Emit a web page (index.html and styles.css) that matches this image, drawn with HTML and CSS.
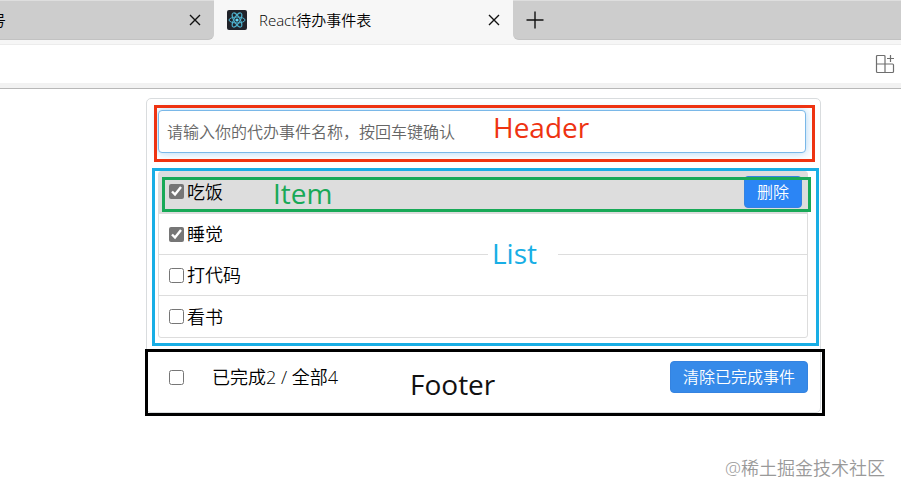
FILE: index.html
```html
<!DOCTYPE html>
<html lang="zh-CN">
<head>
    <meta charset="UTF-8">
    <meta name="viewport" content="width=device-width, initial-scale=1.0">
    <title>React待办事件表</title>
    <link rel="stylesheet" href="styles.css">
</head>
<body>
    <!-- Browser chrome -->
    <div class="tabs">
        <div class="tab tab-left">
            <span class="tab-cut">号</span>
            <button class="icon-btn" aria-label="关闭">
                <svg width="12" height="12" viewBox="0 0 12 12"><path d="M1 1l10 10M11 1L1 11"/></svg>
            </button>
        </div>
        <div class="tab tab-active">
            <svg class="favicon" width="20" height="20" viewBox="0 0 20 20">
                <rect width="20" height="20" rx="2"/>
                <ellipse cx="10" cy="10" rx="8" ry="3"/>
                <ellipse cx="10" cy="10" rx="8" ry="3" transform="rotate(60 10 10)"/>
                <ellipse cx="10" cy="10" rx="8" ry="3" transform="rotate(120 10 10)"/>
                <circle cx="10" cy="10" r="1.6"/>
            </svg>
            <span class="tab-title">React待办事件表</span>
            <button class="icon-btn" aria-label="关闭">
                <svg width="12" height="12" viewBox="0 0 12 12"><path d="M1 1l10 10M11 1L1 11"/></svg>
            </button>
        </div>
        <div class="tab tab-rest">
            <button class="icon-btn" aria-label="新建标签页">
                <svg width="18" height="18" viewBox="0 0 18 18"><path d="M9 0.5v17M0.5 9h17"/></svg>
            </button>
        </div>
    </div>
    <div class="toolbar">
        <button class="icon-btn ext-btn" aria-label="扩展">
            <svg width="20" height="20" viewBox="0 0 20 20"><path d="M10 18.5V2.5q0-1-1-1H2.500q-1 0-1 1v15q0 1 1 1H17.500q1 0 1-1V11q0-1-1-1H1.500M15.500 1v7M12 4.500h7"/></svg>
        </button>
    </div>

    <main class="page">
        <div class="todo">
            <header class="todo-header">
                <input type="text" class="todo-input" aria-label="事件名称" placeholder="请输入你的代办事件名称，按回车键确认">
                <div class="mark mark-header"><span class="mark-text">Header</span></div>
            </header>

            <section class="todo-list">
                <ul class="items">
                    <li class="item item-hover">
                        <label><input type="checkbox" checked>吃饭</label>
                        <button class="btn btn-delete">删除</button>
                        <div class="mark mark-item"><span class="mark-text">Item</span></div>
                    </li>
                    <li class="item"><label><input type="checkbox" checked>睡觉</label></li>
                    <li class="item"><label><input type="checkbox">打代码</label></li>
                    <li class="item"><label><input type="checkbox">看书</label></li>
                </ul>
                <div class="mark mark-list"><span class="mark-text">List</span></div>
            </section>

            <footer class="todo-footer">
                <label><input type="checkbox"><span class="count">已完成2 / 全部4</span></label>
                <button class="btn">清除已完成事件</button>
                <div class="mark mark-footer"><span class="mark-text">Footer</span></div>
            </footer>
        </div>
    </main>

    <div class="watermark">@稀土掘金技术社区</div>
</body>
</html>
```
FILE: styles.css
```css
* {
    box-sizing: border-box;
}

body {
    margin: 0;
    min-height: 100vh;
    position: relative;
    background: #fff;
    color: #000;
    font-family: "Open Sans", "Noto Sans CJK SC", sans-serif;
    font-size: 18px;
    font-weight: 350;
}

/* Browser chrome */
.tabs {
    display: flex;
    height: 45px;
    padding-bottom: 5px;
    background: #f6f6f6;
    border-bottom: 1px solid #ececec;
}

.tab {
    display: flex;
    align-items: center;
    height: 40px;
}

.tab-left,
.tab-rest {
    background: #cdcdcd;
    border-top: 1px solid #dedede;
    border-bottom: 1px solid #c2c2c2;
}

.tab-left {
    width: 214px;
    justify-content: space-between;
    padding-right: 10px;
    border-radius: 0 0 6px 0;
}

.tab-cut {
    display: flex;
    justify-content: flex-end;
    width: 6px;
    overflow: hidden;
    font-size: 15px;
    line-height: 20px;
}

.tab-active {
    width: 299px;
    gap: 12px;
    padding: 0 10px 0 13px;
    background: #f7f7f7;
}

.tab-title {
    flex: 1;
    font-size: 15px;
    line-height: 20px;
}

.tab-rest {
    flex: 1;
    padding-left: 12px;
    border-radius: 0 0 0 6px;
}

.icon-btn {
    display: flex;
    padding: 1px;
    border: none;
    background: none;
}

.tab-left .icon-btn,
.tab-active .icon-btn {
    padding: 3px;
}

.icon-btn path {
    fill: none;
    stroke: #111;
    stroke-width: 1.4;
}

.favicon rect {
    fill: #20232a;
}

.favicon ellipse {
    fill: none;
    stroke: #4fb4d0;
    stroke-width: 1;
}

.favicon circle {
    fill: #61dafb;
}

.toolbar {
    display: flex;
    align-items: center;
    justify-content: flex-end;
    height: 44px;
    padding-right: 5px;
    border-bottom: 1px solid #b8b8b8;
    box-shadow: inset 0 -5px #f2f2f2;
}

.ext-btn {
    margin-bottom: 5px;
}

.ext-btn path {
    stroke: #6e6e6e;
    stroke-width: 1.2;
}

/* Todo card */
.page {
    padding: 9px 80px 0 146px;
}

.todo {
    padding: 11px 12px 19px 11px;
    border: 1px solid #d9dcde;
    border-radius: 5px;
}

.todo-header,
.todo-list,
.todo-footer,
.item {
    position: relative;
}

.todo-input {
    display: block;
    width: calc(100% - 2px);
    height: 43px;
    padding: 0 8px;
    border: 1px solid #7ab8e8;
    border-radius: 4px;
    box-shadow: 0 0 8px rgba(82, 168, 236, 0.5);
    font-family: inherit;
    font-size: 16px;
    font-weight: inherit;
}

.todo-input::placeholder {
    color: #666;
}

.items {
    margin: 18px 0 0;
    padding: 0;
    list-style: none;
    border: 1px solid #ddd;
    border-radius: 3px;
}

.item {
    display: flex;
    align-items: center;
    justify-content: space-between;
    height: 41px;
    padding: 0 5px 0 10px;
    border-bottom: 1px solid #ddd;
}

.item:last-child {
    border-bottom: none;
}

.item-hover {
    height: 42px;
    padding-bottom: 2px;
    background: #ddd;
}

label {
    display: flex;
    align-items: center;
    gap: 3px;
    line-height: 24px;
}

input[type="checkbox"] {
    width: 15px;
    height: 15px;
    margin: 0;
    accent-color: #767676;
}

.btn {
    height: 32px;
    padding: 0 12px;
    border: 1px solid #3583e0;
    border-radius: 4px;
    background: #368ae9;
    color: #fff;
    font-family: inherit;
    font-size: 16px;
    font-weight: inherit;
    line-height: 28px;
}

.btn-delete {
    background: #2b85f5;
}

.todo-footer {
    display: flex;
    align-items: center;
    justify-content: space-between;
    margin-top: 23px;
    padding-left: 11px;
}

.todo-footer label {
    gap: 28px;
}

/* Coloured frames that name each component */
.mark {
    position: absolute;
    border: 3px solid;
    pointer-events: none;
}

.mark-text {
    position: absolute;
    font-size: 28px;
    font-weight: 400;
    line-height: 36px;
}

.mark-header {
    inset: -5px -7px -9px -4px;
    color: #ee3311;
}

.mark-header .mark-text {
    left: 336px;
    top: 1px;
}

.mark-item {
    inset: 5px -4px 1px 3px;
    color: #18a957;
}

.mark-item .mark-text {
    left: 108px;
    top: -5px;
}

.mark-list {
    inset: -3px -11px -8px -6px;
    color: #18aee5;
}

.mark-list .mark-text {
    left: 333px;
    top: 64px;
    width: 70px;
    padding-left: 4px;
    background: #fff;
}

.mark-footer {
    inset: -12px -17px -23px -13px;
    color: #000;
}

.mark-footer .mark-text {
    left: 262px;
    top: 14px;
    color: #111;
}

.watermark {
    position: absolute;
    right: 16px;
    bottom: 14px;
    color: #999;
    font-size: 18px;
    line-height: 24px;
}
```
